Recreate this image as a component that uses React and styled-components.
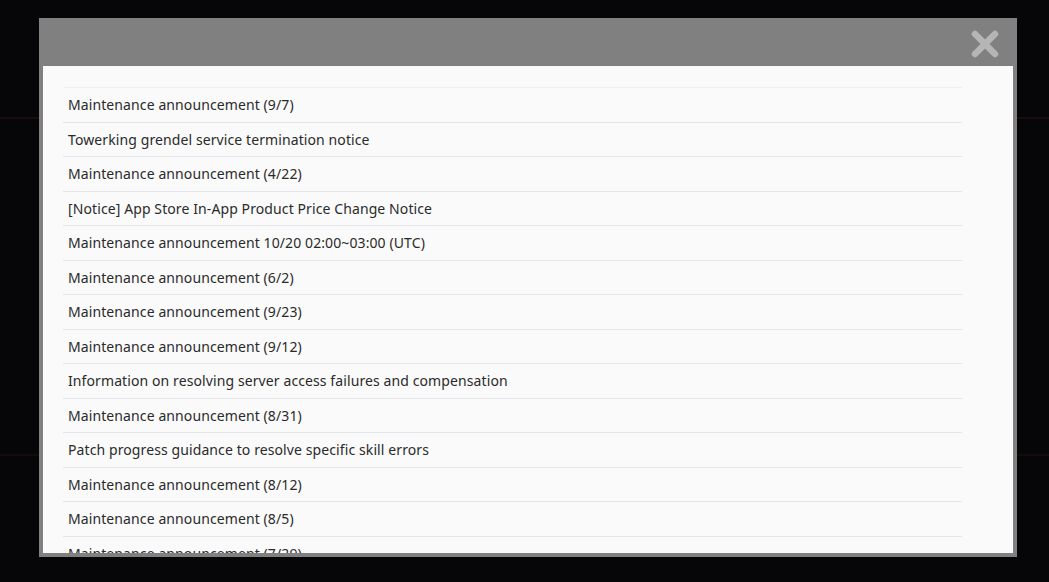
import React from 'react';
import styled, { createGlobalStyle } from 'styled-components';

const GlobalStyle = createGlobalStyle`
  html, body {
    margin: 0;
    padding: 0;
    background: #060608;
    overflow: hidden;
  }
  body {
    font-family: "Noto Sans", "Open Sans", sans-serif;
  }
`;

const Backdrop = styled.div`
  width: 1049px;
  height: 582px;
  box-sizing: border-box;
  padding: 18px 32px 25px 39px;
  background:
    linear-gradient(#060608 0 117px, #1a0c0c 117px 119px, #060608 119px 454px, #140a0a 454px 456px, #060608 456px);
`;

const Modal = styled.div`
  width: 978px;
  height: 539px;
  background: #808080;
  display: flex;
  flex-direction: column;
  box-sizing: border-box;
  padding: 0 4px 4px 4px;
`;

const Header = styled.div`
  height: 48px;
  flex: none;
  display: flex;
  justify-content: flex-end;
  align-items: flex-start;
  padding-top: 12px;
  box-sizing: border-box;
`;

const CloseButton = styled.button`
  background: none;
  border: none;
  padding: 0;
  margin-right: 14px;
  width: 28px;
  height: 28px;
  cursor: pointer;
  color: #b5b5b5;
`;

const Body = styled.div`
  flex: 1;
  min-height: 0;
  background: #fafafa;
  overflow: hidden;
  padding: 21px 51px 0 20px;
`;

const List = styled.ul`
  list-style: none;
  margin: 0;
  padding: 0;
`;

const Item = styled.li`
  box-sizing: border-box;
  height: 34.5px;
  display: flex;
  align-items: center;
  border-top: 1px solid ${(p) => (p.$first ? '#f0f0f0' : '#e4e6ec')};
  padding: 0 5px;
  font-size: 14px;
  color: #2a2a2a;
  letter-spacing: 0.1px;
  cursor: pointer;
  white-space: nowrap;
`;

const notices = [
  'Maintenance announcement (9/7)',
  'Towerking grendel service termination notice',
  'Maintenance announcement (4/22)',
  '[Notice] App Store In-App Product Price Change Notice',
  'Maintenance announcement 10/20 02:00~03:00 (UTC)',
  'Maintenance announcement (6/2)',
  'Maintenance announcement (9/23)',
  'Maintenance announcement (9/12)',
  'Information on resolving server access failures and compensation',
  'Maintenance announcement (8/31)',
  'Patch progress guidance to resolve specific skill errors',
  'Maintenance announcement (8/12)',
  'Maintenance announcement (8/5)',
  'Maintenance announcement (7/29)',
];

const CloseIcon = () => (
  <svg width="28" height="28" viewBox="0 0 28 28">
    <path d="M4 4 L24 24 M24 4 L4 24" stroke="currentColor" strokeWidth="6.5" strokeLinecap="round" fill="none" />
  </svg>
);

const App = () => (
  <>
    <GlobalStyle />
    <Backdrop>
      <Modal>
        <Header>
          <CloseButton aria-label="Close">
            <CloseIcon />
          </CloseButton>
        </Header>
        <Body>
          <List>
            {notices.map((n, i) => (
              <Item key={i} $first={i === 0}>{n}</Item>
            ))}
          </List>
        </Body>
      </Modal>
    </Backdrop>
  </>
);

export default App;
